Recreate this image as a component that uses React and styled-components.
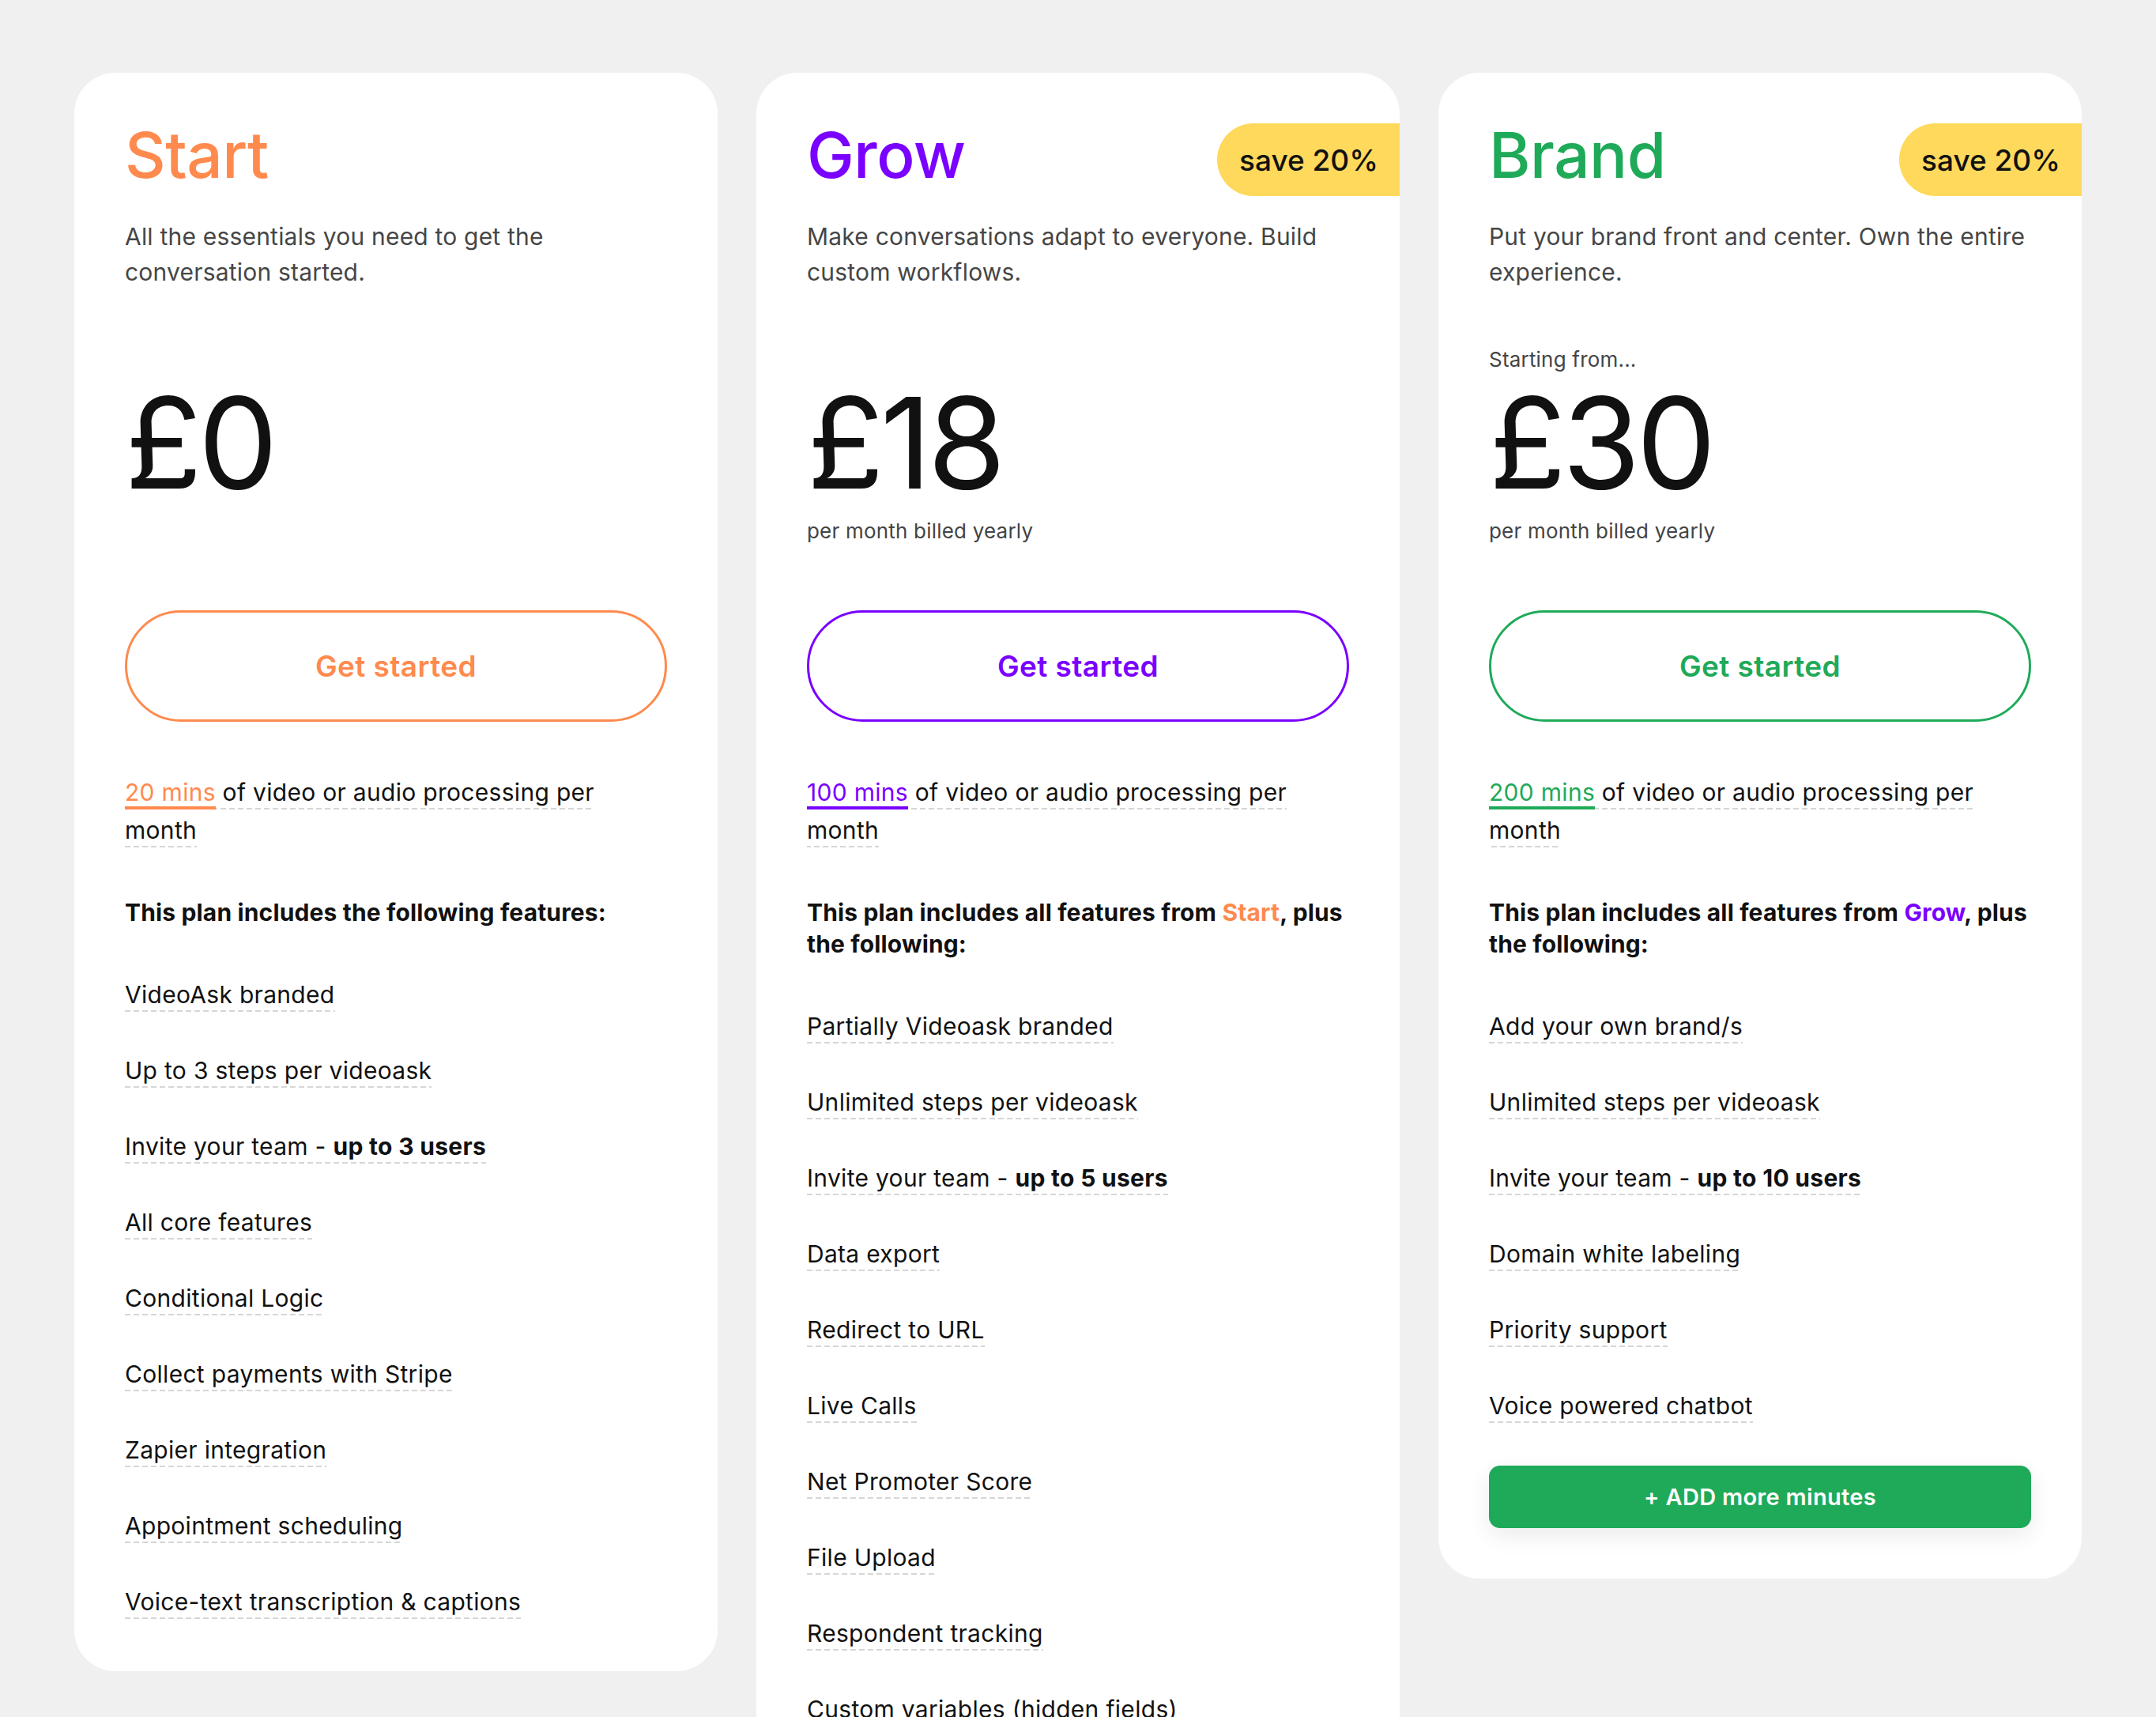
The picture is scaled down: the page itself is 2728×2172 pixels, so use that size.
import React from 'react';
import styled, { createGlobalStyle } from 'styled-components';

const plans = [
  {
    name: 'Start',
    color: '#ff8a4e',
    description: 'All the essentials you need to get the conversation started.',
    price: '£0',
    minutes: '20 mins',
    includes: null,
    features: [
      'VideoAsk branded',
      'Up to 3 steps per videoask',
      ['Invite your team - ', 'up to 3 users'],
      'All core features',
      'Conditional Logic',
      'Collect payments with Stripe',
      'Zapier integration',
      'Appointment scheduling',
      'Voice-text transcription & captions',
    ],
  },
  {
    name: 'Grow',
    color: '#7a00ff',
    badge: 'save 20%',
    description: 'Make conversations adapt to everyone. Build custom workflows.',
    price: '£18',
    billed: 'per month billed yearly',
    minutes: '100 mins',
    includes: { name: 'Start', color: '#ff8a4e' },
    features: [
      'Partially Videoask branded',
      'Unlimited steps per videoask',
      ['Invite your team - ', 'up to 5 users'],
      'Data export',
      'Redirect to URL',
      'Live Calls',
      'Net Promoter Score',
      'File Upload',
      'Respondent tracking',
      'Custom variables (hidden fields)',
      'Custom thank you screen',
      'Embed on your website',
    ],
  },
  {
    name: 'Brand',
    color: '#1faa59',
    badge: 'save 20%',
    description: 'Put your brand front and center. Own the entire experience.',
    startingFrom: 'Starting from...',
    price: '£30',
    billed: 'per month billed yearly',
    minutes: '200 mins',
    includes: { name: 'Grow', color: '#7a00ff' },
    features: [
      'Add your own brand/s',
      'Unlimited steps per videoask',
      ['Invite your team - ', 'up to 10 users'],
      'Domain white labeling',
      'Priority support',
      'Voice powered chatbot',
    ],
    addMinutes: true,
  },
];

const PlanCard = ({ plan }) => (
  <Card>
    <TitleRow>
      <Title $color={plan.color}>{plan.name}</Title>
      {plan.badge && <Badge>{plan.badge}</Badge>}
    </TitleRow>
    <Description>{plan.description}</Description>

    <PriceBlock>
      <SmallNote $hidden={!plan.startingFrom}>{plan.startingFrom || '.'}</SmallNote>
      <Price>{plan.price}</Price>
      <BilledNote>{plan.billed || ''}</BilledNote>
    </PriceBlock>

    <OutlineButton $color={plan.color}>Get started</OutlineButton>

    <Minutes>
      <Dashed>
        <Highlight $color={plan.color}>{plan.minutes}</Highlight> of video or audio
        processing per month
      </Dashed>
    </Minutes>

    <FeaturesHeading>
      {plan.includes ? (
        <>
          This plan includes all features from{' '}
          <PlanName $color={plan.includes.color}>{plan.includes.name}</PlanName>, plus the
          following:
        </>
      ) : (
        'This plan includes the following features:'
      )}
    </FeaturesHeading>

    <FeatureList>
      {plan.features.map((feature, i) => (
        <li key={i}>
          <Dashed>
            {Array.isArray(feature) ? (
              <>
                {feature[0]}
                <strong>{feature[1]}</strong>
              </>
            ) : (
              feature
            )}
          </Dashed>
        </li>
      ))}
    </FeatureList>

    {plan.addMinutes && <AddButton>+ ADD more minutes</AddButton>}
  </Card>
);

const App = () => {
  return (
    <>
      <GlobalStyle />
      <Page>
        {plans.map(plan => (
          <PlanCard key={plan.name} plan={plan} />
        ))}
      </Page>
    </>
  );
};

export default App;

//styles

const GlobalStyle = createGlobalStyle`
  body {
    margin: 0;
    background: #f0f0f0;
    font-family: Inter, "Noto Sans", sans-serif;
    color: #111;
  }
`;

const Page = styled.div`
  display: grid;
  grid-template-columns: repeat(3, 814px);
  column-gap: 49px;
  align-items: start;
  padding: 92px 94px;
`;

const Card = styled.div`
  background: #fff;
  border-radius: 52px;
  padding: 64px;
  display: flex;
  flex-direction: column;
`;

const TitleRow = styled.div`
  display: flex;
  justify-content: space-between;
  align-items: flex-start;
  height: 92px;
`;

const Title = styled.h2`
  margin: 0;
  font-size: 80px;
  line-height: 1;
  font-weight: 500;
  letter-spacing: -0.5px;
  color: ${({ $color }) => $color};
`;

const Badge = styled.div`
  display: flex;
  align-items: center;
  height: 92px;
  margin-right: -64px;
  padding: 0 27px 0 28px;
  border-radius: 46px 0 0 46px;
  background: #ffd95c;
  font-size: 37px;
  font-weight: 500;
  color: #111;
`;

const Description = styled.p`
  margin: 29px 0 0;
  font-size: 30px;
  line-height: 45px;
  letter-spacing: 0.2px;
  color: #464646;
`;

const PriceBlock = styled.div`
  margin-top: 68px;
  display: flex;
  flex-direction: column;
`;

const SmallNote = styled.div`
  font-size: 26px;
  line-height: 39px;
  letter-spacing: 0.2px;
  color: #444;
  visibility: ${({ $hidden }) => ($hidden ? 'hidden' : 'visible')};
`;

const Price = styled.div`
  margin-top: 6px;
  font-size: 160px;
  line-height: 1;
  font-weight: 400;
  letter-spacing: -5px;
  color: #111;
`;

const BilledNote = styled.div`
  margin-top: 12px;
  min-height: 39px;
  font-size: 26px;
  line-height: 39px;
  letter-spacing: 0.2px;
  color: #444;
`;

const OutlineButton = styled.button`
  margin-top: 81px;
  height: 141px;
  width: 100%;
  border: 3px solid ${({ $color }) => $color};
  border-radius: 999px;
  background: transparent;
  color: ${({ $color }) => $color};
  font-family: inherit;
  font-size: 37px;
  font-weight: 600;
  letter-spacing: 0.4px;
  cursor: pointer;
`;

const Minutes = styled.p`
  margin: 65px 0 0;
  font-size: 30px;
  line-height: 48px;
  letter-spacing: 0.3px;
  color: #111;
`;

const Dashed = styled.span`
  padding-bottom: 4px;
  background-image: linear-gradient(to right, #d6d6d6 60%, transparent 60%);
  background-size: 11px 2px;
  background-repeat: repeat-x;
  background-position: left bottom;

  & strong {
    font-weight: 700;
  }
`;

const Highlight = styled.span`
  padding-bottom: 4px;
  color: ${({ $color }) => $color};
  background-image: linear-gradient(${({ $color }) => $color}, ${({ $color }) => $color});
  background-size: 100% 4px;
  background-repeat: no-repeat;
  background-position: left bottom;
`;

const FeaturesHeading = styled.p`
  margin: 60px 0 0;
  font-size: 30px;
  line-height: 40px;
  font-weight: 700;
  letter-spacing: 0.15px;
  color: #111;
`;

const PlanName = styled.span`
  color: ${({ $color }) => $color};
`;

const FeatureList = styled.ul`
  list-style: none;
  margin: 60px 0 0;
  padding: 0;
  display: flex;
  flex-direction: column;
  gap: 48px;

  & li {
    font-size: 30px;
    line-height: 48px;
    letter-spacing: 0.3px;
    color: #111;
  }
`;

const AddButton = styled.button`
  margin-top: 52px;
  height: 79px;
  width: 100%;
  border: none;
  border-radius: 14px;
  background: #1faa59;
  color: #fff;
  font-family: inherit;
  font-size: 29px;
  font-weight: 600;
  letter-spacing: 0.3px;
  box-shadow: 0 10px 30px rgba(0, 0, 0, 0.08);
  cursor: pointer;
`;
